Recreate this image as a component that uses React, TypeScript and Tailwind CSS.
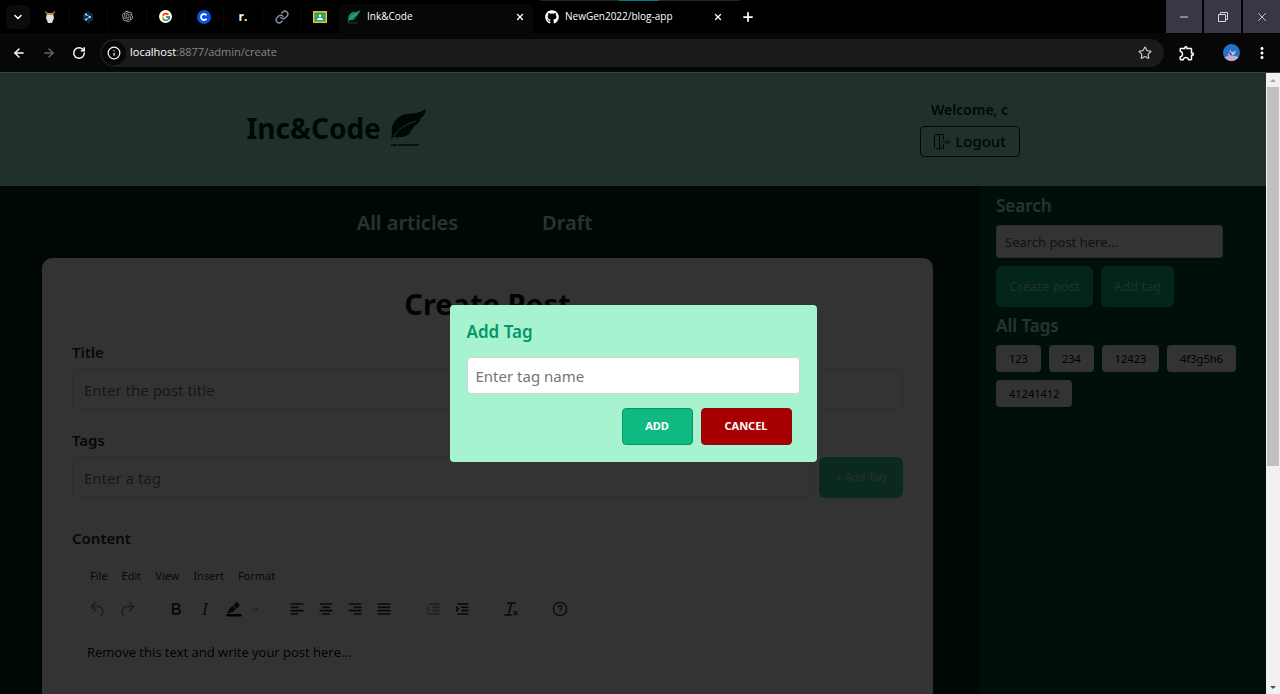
import type { ReactNode } from "react";
import {
  ArrowLeft,
  ArrowRight,
  ChevronDown,
  CircleHelp,
  Info,
  Link,
  Minus,
  Plus,
  RotateCw,
  Star,
  X,
} from "lucide-react";
import { FcGoogle } from "react-icons/fc";
import { FaGithub } from "react-icons/fa";
import { SiOpenai } from "react-icons/si";
import { MdOutlineExtension, MdMoreVert } from "react-icons/md";

const row = (x: number, y: number, w: number) => (
  <rect key={`${x}-${y}`} x={x} y={y} width={w} height="2" rx="1" />
);

function Glyph({ children, className = "" }: { children: ReactNode; className?: string }) {
  return (
    <svg viewBox="0 0 24 24" className={`size-5 ${className}`} fill="currentColor" aria-hidden="true">
      {children}
    </svg>
  );
}

const undoPath =
  "M6.4 8H12c3.7 0 6.2 2 6.8 5.1.6 2.7-.4 5.6-2.3 6.8a1 1 0 0 1-1-1.8c1.1-.6 1.8-2.7 1.4-4.6-.5-2.1-2.1-3.5-4.9-3.5H6.4l3.3 3.3a1 1 0 1 1-1.4 1.4l-5-5a1 1 0 0 1 0-1.4l5-5a1 1 0 0 1 1.4 1.4L6.4 8Z";

type Tool = { name: string; icon: ReactNode; faded?: boolean; narrow?: boolean };

const toolGroups: Tool[][] = [
  [
    { name: "Undo", faded: true, icon: <Glyph><path d={undoPath} /></Glyph> },
    { name: "Redo", faded: true, icon: <Glyph className="-scale-x-100"><path d={undoPath} /></Glyph> },
  ],
  [
    {
      name: "Bold",
      icon: (
        <Glyph>
          <path d="M7.8 19c-.3 0-.5 0-.6-.2l-.2-.5V5.7c0-.2 0-.4.2-.5l.6-.2h5c1.5 0 2.7.3 3.5 1 .7.6 1.1 1.4 1.1 2.5a3 3 0 0 1-.6 1.9c-.4.6-1 1-1.6 1.2.4.1.9.3 1.3.6s.8.7 1 1.2c.4.4.5 1 .5 1.6 0 1.3-.4 2.3-1.3 3-.8.7-2.1 1-3.8 1H7.8Zm5-8.3c.6 0 1.2-.1 1.6-.5.4-.3.6-.7.6-1.3 0-1.1-.8-1.7-2.3-1.7H9.3v3.5h3.4Zm.5 6c.7 0 1.3-.1 1.7-.4.4-.4.6-.9.6-1.5s-.2-1-.7-1.4c-.4-.3-1-.4-2-.4H9.4v3.8h4Z" />
        </Glyph>
      ),
    },
    {
      name: "Italic",
      icon: (
        <Glyph>
          <path d="m16.7 4.7-.1.9h-.3c-.6 0-1 0-1.4.3-.3.3-.4.6-.5 1.1l-2.1 9.8v.6c0 .5.4.8 1.4.8h.2l-.2.8H8l.2-.8h.2c1.1 0 1.8-.5 2-1.5l2-9.8.1-.5c0-.6-.4-.8-1.4-.8h-.3l.2-.9h5.8Z" />
        </Glyph>
      ),
    },
    {
      name: "Background color",
      icon: (
        <Glyph>
          <path d="M3 18h18v3H3z" fill="#000" />
          <path d="M7.7 16.7H3l3.3-3.3-.7-.8L10.2 8l4 4.1-4 4.2c-.2.2-.6.2-.8 0l-.6-.7-1.1 1.1Zm5-7.5L11 7.4l3-2.9a2 2 0 0 1 2.6 0L18 6c.7.7.7 2 0 2.7l-2.9 2.9-2.4-2.4Z" />
        </Glyph>
      ),
    },
    { name: "Background color menu", narrow: true, icon: <ChevronDown className="size-3 shrink-0 text-[#4b5563]" /> },
  ],
  [
    { name: "Align left", icon: <Glyph>{[row(4, 5, 16), row(4, 9, 10), row(4, 13, 16), row(4, 17, 10)]}</Glyph> },
    { name: "Align center", icon: <Glyph>{[row(4, 5, 16), row(7, 9, 10), row(4, 13, 16), row(7, 17, 10)]}</Glyph> },
    { name: "Align right", icon: <Glyph>{[row(4, 5, 16), row(10, 9, 10), row(4, 13, 16), row(10, 17, 10)]}</Glyph> },
    { name: "Justify", icon: <Glyph>{[row(4, 5, 16), row(4, 9, 16), row(4, 13, 16), row(4, 17, 16)]}</Glyph> },
  ],
  [
    {
      name: "Decrease indent",
      faded: true,
      icon: (
        <Glyph>
          {[row(6, 5, 14), row(11, 9, 9), row(11, 13, 9), row(6, 17, 14)]}
          <path d="M7.6 9.2a.8.8 0 0 1 0 1.2L6 12l1.600 1.600a.8.8 0 0 1-1.200 1.200L3.600 12l2.800-2.800a.8.8 0 0 1 1.200 0Z" />
        </Glyph>
      ),
    },
    {
      name: "Increase indent",
      icon: (
        <Glyph>
          {[row(6, 5, 14), row(11, 9, 9), row(11, 13, 9), row(6, 17, 14)]}
          <path d="M4.400 8.800a.8.8 0 0 1 1.200 0L8.900 12l-3.300 3.200a.8.8 0 0 1-1.200-1.200l1.200-2-1.200-2a.8.8 0 0 1 0-1.200Z" />
        </Glyph>
      ),
    },
  ],
  [
    {
      name: "Clear formatting",
      icon: (
        <Glyph>
          <path d="M13.2 6a1 1 0 0 1 0 .2l-2.6 10a1 1 0 0 1-1 .8h-.2a.8.8 0 0 1-.8-1l2.6-10H8a1 1 0 1 1 0-2h9a1 1 0 0 1 0 2h-3.8ZM5 18h7a1 1 0 0 1 0 2H5a1 1 0 0 1 0-2Zm14 1.500L17.500 18 16 19.500a.7.7 0 0 1-1-1l1.500-1.500-1.500-1.500a.7.7 0 0 1 1-1l1.500 1.500 1.500-1.500a.7.7 0 0 1 1 1L18.500 17l1.500 1.500a.7.7 0 0 1-1 1Z" />
        </Glyph>
      ),
    },
  ],
  [{ name: "Help", icon: <CircleHelp className="size-4" /> }],
];

function Feather({ className }: { className: string }) {
  return (
    <svg viewBox="0 0 38 40" className={className} aria-hidden="true">
      <path
        d="M37 1c-1 5-2 7-6 10 1 1-1 4-4 6-3 3-5 5-6 8-3 4-10 5-16 4l-3 4 1-6C1 18 6 11 13 7c6-2 9-1 14-2 4-1 7-2 10-4Z"
        fill="currentColor"
      />
      <path d="M2 36c2-10 10-19 25-23" fill="none" stroke="#a7f3d0" strokeWidth="1" />
      <path d="M2 37h28" stroke="currentColor" strokeWidth="1.500" strokeDasharray="6 1 30" />
    </svg>
  );
}

function DoorIcon() {
  return (
    <svg viewBox="0 0 18 18" className="size-[18px]" fill="none" stroke="currentColor" aria-hidden="true">
      <path d="M1.500 2.500v12l5 2V1.500l-4 0-1 1ZM6.500 1.500h4V7M10.500 11v4.500h-4M9 9h7.500M14 6.500 16.500 9 14 11.500" />
    </svg>
  );
}

const favicons: { name: string; icon: ReactNode }[] = [
  {
    name: "Llama",
    icon: (
      <svg viewBox="0 0 14 14" className="size-3.5">
        <path d="M2 0c0 3 1 4 3 4h4c2 0 3-1 3-4l-1 2-2 1H5L3 2Z" fill="#d98a3c" />
        <path d="M4 3h6l1 5-2 5H5L3 8Z" fill="#e4ddd6" />
        <path d="M4 3h6v2H4Z" fill="#c88f5c" />
      </svg>
    ),
  },
  {
    name: "DeepL",
    icon: (
      <svg viewBox="0 0 14 14" className="size-3.5">
        <path d="m7 1 5 3v6l-3 2v2l-3-2-4-2V4Z" fill="#0f2b46" />
        <path d="m5 4.500 4 2.500-4 2.500" stroke="#8fbbe0" fill="none" />
        <circle cx="5" cy="4.500" r="1" fill="#d3e7f8" />
        <circle cx="9" cy="7" r="1" fill="#d3e7f8" />
        <circle cx="5" cy="9.500" r="1" fill="#d3e7f8" />
      </svg>
    ),
  },
  { name: "ChatGPT", icon: <SiOpenai className="size-[11px] text-[#b4b4b4]" /> },
  {
    name: "Google",
    icon: (
      <span className="flex size-[13px] items-center justify-center rounded-full bg-white">
        <FcGoogle className="size-2.5" />
      </span>
    ),
  },
  {
    name: "Coinbase",
    icon: (
      <svg viewBox="0 0 14 14" className="size-3.5">
        <circle cx="7" cy="7" r="7" fill="#0a52e0" />
        <path d="M9.500 5.300A3 3 0 1 0 9.500 8.700" stroke="#fff" strokeWidth="1.800" fill="none" />
      </svg>
    ),
  },
  { name: "r.", icon: <span className="text-xs font-bold text-white">r.</span> },
  { name: "Link", icon: <Link className="size-3.5 text-[#8492a3]" strokeWidth={2.500} /> },
  {
    name: "Classroom",
    icon: (
      <svg viewBox="0 0 14 12" className="h-3 w-3.5">
        <path d="M0 0h14v12H0Z" fill="#f4b92a" />
        <path d="M1.500 1.500h11v9h-11Z" fill="#23a566" />
        <circle cx="7" cy="4.700" r="1.300" fill="#fff" />
        <path d="M4 9c0-3 6-3 6 0Z" fill="#fff" />
      </svg>
    ),
  },
];

function BrowserBar() {
  return (
    <div className="shrink-0 bg-[#070707] font-['Open_Sans','Noto_Sans',sans-serif] text-white">
      <div className="relative flex h-[33px] items-center bg-black">
        <div className="absolute top-0 left-[540px] h-px w-[200px] bg-[#222]" />
        <div className="absolute top-0 left-[619px] h-px w-10 bg-[#007b83]" />
        <button aria-label="Search tabs" className="ml-1.5 flex h-6 w-6 items-center justify-center rounded-md bg-[#0b0b0b]">
          <ChevronDown className="size-3" strokeWidth={3} />
        </button>
        <div className="flex w-[309px] pl-px">
          {favicons.map((f) => (
            <button key={f.name} aria-label={f.name} className="flex h-5 flex-1 items-center justify-center border-r border-[#0c0c0c] last:border-0">
              {f.icon}
            </button>
          ))}
        </div>
        <div className="mt-1 flex h-[29px] w-[194px] items-center gap-1.5 rounded-t-lg bg-[#070707] px-2 pb-1 text-[10px]">
          <Feather className="size-3.5 text-[#168a60]" />
          <span className="flex-1">Ink&amp;Code</span>
          <button aria-label="Close Ink&amp;Code"><X className="size-2.5" strokeWidth={3} /></button>
        </div>
        <div className="flex w-[190px] items-center gap-1.5 pl-3 text-[10px]">
          <FaGithub className="size-3.5" />
          <span className="flex-1">NewGen2022/blog-app</span>
          <button aria-label="Close NewGen2022/blog-app"><X className="size-2.5" strokeWidth={3} /></button>
        </div>
        <button aria-label="New tab" className="ml-[18px]"><Plus className="size-3.5" strokeWidth={3} /></button>
        <div className="ml-auto flex gap-0.5 self-stretch text-[#d6d6dc]">
          <button aria-label="Minimize" className="flex w-9 items-center justify-center bg-[#383746]"><Minus className="size-3" strokeWidth={2} /></button>
          <button aria-label="Restore" className="flex w-[37px] items-center justify-center bg-[#383746]">
            <svg viewBox="0 0 10 10" className="size-2.5" fill="none" stroke="currentColor">
              <path d="M.5 2.500h7v7h-7ZM2.500 2.500v-2h7v7h-2" />
            </svg>
          </button>
          <button aria-label="Close window" className="flex w-[37px] items-center justify-center bg-[#383746]"><X className="size-3.5" strokeWidth={1.500} /></button>
        </div>
      </div>
      <div className="flex h-[39px] items-center">
        <div className="flex w-[100px] items-center gap-4 pl-3">
          <button aria-label="Back"><ArrowLeft className="size-3.5" strokeWidth={2.500} /></button>
          <button aria-label="Forward"><ArrowRight className="size-3.5 text-[#666]" strokeWidth={2.500} /></button>
          <button aria-label="Reload"><RotateCw className="size-3.5" strokeWidth={2.500} /></button>
        </div>
        <div className="flex h-7 flex-1 items-center rounded-full bg-[#1a1a1a] px-0.5">
          <button aria-label="Site information" className="flex size-6 items-center justify-center rounded-full bg-[#070707]"><Info className="size-3.5" /></button>
          <span className="ml-1 flex-1 text-[11px] text-[#858585]"><span className="text-white">localhost</span>:8877/admin/create</span>
          <button aria-label="Bookmark" className="mr-2.5"><Star className="size-3.5 text-[#ccc]" /></button>
        </div>
        <div className="flex w-[116px] items-center pl-3.5">
          <button aria-label="Extensions"><MdOutlineExtension className="size-[18px]" /></button>
          <button aria-label="Profile" className="ml-[27px]">
            <svg viewBox="0 0 18 18" className="size-[17px]">
              <circle cx="9" cy="9" r="9" fill="#2671c9" />
              <path d="M1.500 14a9 9 0 0 0 15 0c-4-2-10-2-15 0Z" fill="#c4a8d2" />
              <path d="m5 12 3-6 1 3 5-2-2 4-4 2Z" fill="#a9c5e4" />
              <path d="m7 9 2 3" stroke="#7a2f3c" strokeWidth="1.500" />
            </svg>
          </button>
          <button aria-label="Menu" className="ml-[13px]"><MdMoreVert className="size-[18px]" /></button>
        </div>
      </div>
    </div>
  );
}

function Header() {
  return (
    <header className="flex h-[113px] shrink-0 items-center justify-around bg-[#a7f3d0] pb-1 text-[#022c22]">
      <div className="flex items-center gap-2">
        <span className="text-[28px] leading-9 font-bold">Inc&amp;Code</span>
        <Feather className="h-10 w-[38px]" />
      </div>
      <div className="flex flex-col items-center gap-1">
        <p className="text-sm leading-6 font-semibold">Welcome, c</p>
        <button className="flex h-[31px] w-[100px] items-center justify-center gap-1 rounded border border-[#022c22] text-[15px] font-medium">
          <DoorIcon />
          Logout
        </button>
      </div>
    </header>
  );
}

function Editor() {
  return (
    <div className="mt-[5px] h-80 rounded-lg border border-[#ececec]">
      <div className="flex gap-[14px] pt-2.5 pl-[17px] text-[11px] leading-5 text-[#222f3e]">
        {["File", "Edit", "View", "Insert", "Format"].map((m) => (
          <button key={m}>{m}</button>
        ))}
      </div>
      <div className="mx-2.5 flex gap-5 border-b border-[#f0f0f0] pt-2 pb-[6px] text-[#222f3e]">
        {toolGroups.map((group, i) => (
          <div key={i} className="flex h-[29px] items-center">
            {group.map((t) => (
              <button
                key={t.name}
                aria-label={t.name}
                className={`flex h-full items-center justify-center ${t.narrow ? "w-[14px]" : "w-[29px]"} ${t.faded ? "opacity-50" : ""}`}
              >
                {t.icon}
              </button>
            ))}
          </div>
        ))}
      </div>
      <p className="px-3.5 pt-3 font-['Open_Sans','Noto_Sans',sans-serif] text-[13px] leading-5 text-black">Remove this text and write your post here...</p>
    </div>
  );
}

const field =
  "h-[41px] min-w-0 flex-1 rounded-md border border-[#e0e2e6] bg-white px-[11px] text-[15px] placeholder:text-[#757575]";
const label = "text-[15px] leading-6 font-semibold text-[#1f2937]";

function CreatePost() {
  return (
    <main className="min-w-0 flex-1 pr-[47px] pl-[42px]">
      <nav className="flex h-[72px] items-center justify-center gap-[84px] pt-0.5 pr-[26px] text-[20px] font-semibold text-[#d1fae5]">
        <a href="#articles">All articles</a>
        <a href="#draft">Draft</a>
      </nav>
      <section className="rounded-t-[10px] bg-white px-[30px] pt-7">
        <h1 className="text-center text-[29px] leading-9 font-bold text-[#111]">Create Post</h1>
        <div className="mt-[18px] flex flex-col gap-[5px]">
          <label htmlFor="title" className={label}>Title</label>
          <div className="flex"><input id="title" placeholder="Enter the post title" className={field} /></div>
        </div>
        <div className="mt-[18px] flex flex-col gap-[5px]">
          <label htmlFor="tags" className={label}>Tags</label>
          <div className="flex gap-2">
            <input id="tags" placeholder="Enter a tag" className={field} />
            <button className="h-[41px] w-[84px] rounded-md bg-[#34d399] text-[11px] text-[#d8e4df]">+ Add Tag</button>
          </div>
        </div>
        <div className="mt-7">
          <h2 className={label}>Content</h2>
          <Editor />
        </div>
      </section>
    </main>
  );
}

function Sidebar() {
  return (
    <aside className="w-[286px] bg-[#064e3b] px-4 pt-2">
      <h2 className="text-[17px] leading-6 font-semibold text-[#d1fae5]">
        <label htmlFor="search">Search</label>
      </h2>
      <input id="search" placeholder="Search post here..." className="mt-[7px] block h-[33px] w-[227px] rounded-[3px] border border-[#cfcfcf] bg-white px-2 text-[13px] placeholder:text-[#555]" />
      <div className="mt-2 flex gap-2 text-[13px] text-[#a7f3d0]">
        <button className="h-[41px] w-[97px] rounded-md bg-[#10b981]">Create post</button>
        <button className="h-[41px] w-[73px] rounded-md bg-[#10b981]">Add tag</button>
      </div>
      <h2 className="mt-[7px] text-[17px] leading-6 font-semibold text-[#d1fae5]">All Tags</h2>
      <ul className="mt-[7px] flex flex-wrap gap-2 text-[11px] leading-[27px] text-black">
        {["123", "234", "12423", "4f3g5h6", "41241412"].map((t) => (
          <li key={t} className="rounded bg-white px-[13px]">{t}</li>
        ))}
      </ul>
    </aside>
  );
}

function AddTagDialog() {
  return (
    <div className="absolute inset-0 flex items-center justify-center bg-black/80">
      <div role="dialog" aria-labelledby="dialog-title" className="w-[367px] rounded bg-[#a7f3d0] px-[17px] pt-[15px] pb-[17px]">
        <h2 id="dialog-title" className="text-[17px] leading-6 font-semibold text-[#059669]">
          <label htmlFor="tag-name">Add Tag</label>
        </h2>
        <input id="tag-name" placeholder="Enter tag name" className="mt-[13px] block h-[37px] w-full rounded border border-[#d1d5db] bg-white px-2 text-[15px] placeholder:text-[#757575]" />
        <div className="mt-3.5 flex justify-end gap-2 pr-2 text-[11px] font-bold text-white">
          <button className="h-[37px] w-[71px] rounded border border-[#059669] bg-[#10b981]">ADD</button>
          <button className="h-[37px] w-[91px] rounded border border-[#7f1010] bg-[#a80000]">CANCEL</button>
        </div>
      </div>
    </div>
  );
}

export default function App() {
  return (
    <div className="flex h-screen flex-col overflow-hidden">
      <BrowserBar />
      <div className="flex min-h-0 flex-1 border-t border-[#39453f]">
        <div className="relative flex min-w-0 flex-1 flex-col overflow-hidden bg-[#022c22] font-['Noto_Sans','Open_Sans',sans-serif]">
          <Header />
          <div className="flex flex-1">
            <CreatePost />
            <Sidebar />
          </div>
          <AddTagDialog />
        </div>
        <div aria-hidden="true" className="flex w-3.5 flex-col items-center bg-[#f1f1f1]">
          <svg viewBox="0 0 14 14" className="size-3.5"><path d="M4 9h6L7 6Z" fill="#a3a3a3" /></svg>
          <div className="h-[61%] w-3 bg-[#c1c1c1]" />
          <svg viewBox="0 0 14 14" className="mt-auto size-3.5"><path d="M4 6h6L7 9Z" fill="#505050" /></svg>
        </div>
      </div>
    </div>
  );
}
